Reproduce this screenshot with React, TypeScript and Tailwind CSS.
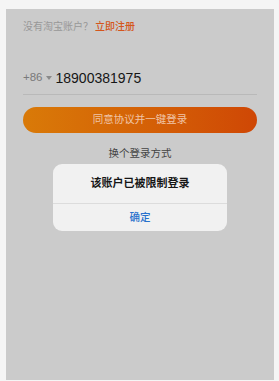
import React from "react";

export default function App() {
  const font = { fontFamily: '"Liberation Sans", "Noto Sans CJK SC", sans-serif' };
  return (
    <div className="w-[279px] h-[381px] bg-[#f5f5f5] pt-[9px] pl-[6px] pr-[5px] pb-[1px]" style={font}>
      <div className="relative h-full bg-[#cbcbcb] px-[17px]">
        <div className="pt-[11px] flex items-center h-[25px] text-[10px] leading-[14px]">
          <span className="text-[#989898]">没有淘宝账户？</span>
          <span className="ml-[2px] font-medium text-[#d4561c]">立即注册</span>
        </div>
        <div className="mt-[34px] flex items-center h-[20px]">
          <span className="text-[11.5px] text-[#7a7a7a]">+86</span>
          <span className="ml-[3px] mr-[4px] w-0 h-0 border-l-[3px] border-r-[3px] border-t-[4px] border-l-transparent border-r-transparent border-t-[#8a8a8a]" />
          <span className="text-[14px] text-[#161616]">18900381975</span>
        </div>
        <div className="mt-[6px] h-px bg-[#b9b9b9]" />
        <div className="mt-[12px] h-[26px] rounded-full bg-gradient-to-r from-[#d97a08] to-[#cf4705] flex items-center justify-center text-[10.5px] text-[#f0c4a6]">
          同意协议并一键登录
        </div>
        <div className="mt-[13px] text-center text-[10.5px] leading-[14px] text-[#444]">换个登录方式</div>

        <div className="absolute left-[47px] top-[155px] w-[174px] h-[67px] rounded-[9px] bg-[#f1f1f1] flex flex-col overflow-hidden">
          <div className="h-[39px] flex items-center justify-center text-[11px] font-semibold text-[#161616]">
            该账户已被限制登录
          </div>
          <div className="h-px bg-[#dcdcdc]" />
          <div className="flex-1 flex items-center justify-center text-[10.5px] font-medium text-[#2a72cc]">确定</div>
        </div>
      </div>
    </div>
  );
}
